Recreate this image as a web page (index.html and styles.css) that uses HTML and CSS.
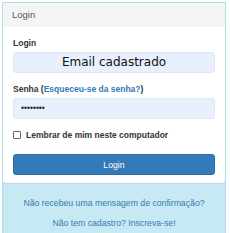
FILE: index.html
```html
<!DOCTYPE html>
<html>
<head>
<meta charset="utf-8">
<link rel="stylesheet" href="styles.css">
</head>
<body>
<div class="wrap">
  <div class="panel">
    <div class="panel-heading">Login</div>
    <div class="panel-body">
      <label class="lbl">Login</label>
      <div class="input email">Email cadastrado</div>
      <label class="lbl">Senha (<a href="#">Esqueceu-se da senha?</a>)</label>
      <div class="input pass">••••••••</div>
      <label class="check"><span class="box"></span>Lembrar de mim neste computador</label>
      <button class="btn">Login</button>
    </div>
  </div>
  <div class="footer">
    <a href="#">Não recebeu uma mensagem de confirmação?</a>
    <a href="#">Não tem cadastro? Inscreva-se!</a>
  </div>
</div>
</body>
</html>
```
FILE: styles.css
```css
html, body { margin: 0; padding: 0; background: #fff; }
body { font-family: "Liberation Sans", Arial, sans-serif; color: #333; }
.wrap {
  margin: 2px 4px 0 2px;
  border: 1px solid #b3deeb;
  border-bottom: none;
  background: #c6e9f3;
  height: 231px;
  box-sizing: border-box;
}
.panel {
  background: #fff;
  border-radius: 0 0 3px 3px;
  box-shadow: 0 1px 1px rgba(0,0,0,0.07);
}
.panel-heading {
  background: #f5f5f5;
  height: 24px;
  line-height: 24px;
  padding-left: 9px;
  font-size: 9.5px;
  color: #555;
}
.panel-body { padding: 11px 10px 8px 10px; display: flex; flex-direction: column; }
.lbl { font-size: 8.5px; font-weight: bold; color: #333; height: 11px; line-height: 11px; }
.lbl a { color: #337ab7; text-decoration: none; }
.input {
  margin-top: 3px;
  height: 21px;
  background: #e8f0fe;
  border: 1px solid #dfe7f4;
  border-radius: 3px;
  box-sizing: border-box;
}
.email {
  font-family: "DejaVu Sans", Verdana, sans-serif;
  font-size: 12px;
  color: #111;
  text-align: center;
  line-height: 19px;
  margin-bottom: 11px;
}
.pass {
  font-size: 8.5px;
  color: #222;
  padding-left: 7px;
  line-height: 18px;
  margin-bottom: 10px;
}
.check { font-size: 8.5px; font-weight: bold; display: flex; align-items: center; height: 11px; }
.box {
  width: 6px; height: 6px; border: 1px solid #666; border-radius: 1px; margin-right: 5px; background: #fff;
}
.btn {
  margin-top: 14px;
  height: 21px;
  padding: 0;
  background: #337ab7;
  border: 1px solid #2e6da4;
  border-radius: 3px;
  color: #fff;
  font-family: "Liberation Sans", Arial, sans-serif;
  font-size: 8.7px;
}
.footer {
  display: flex; flex-direction: column; align-items: center;
  padding-top: 15px; gap: 9px;
}
.footer a { color: #3a7ab5; text-decoration: none; font-size: 8.7px; line-height: 11px; }
```
